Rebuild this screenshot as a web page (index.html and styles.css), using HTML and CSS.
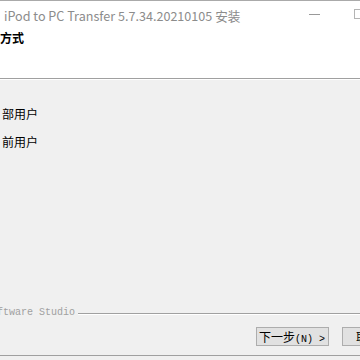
FILE: index.html
```html
<!DOCTYPE html>
<html>
<head>
<meta charset="utf-8">
<link rel="stylesheet" href="styles.css">
</head>
<body>
<div class="window">
  <div class="titlebar">
    <span class="title">iPod to PC Transfer 5.7.34.20210105 安装</span>
    <span class="min"></span>
    <span class="max"></span>
  </div>
  <div class="header">
    <div class="heading">方式</div>
  </div>
  <div class="sep"></div>
  <div class="body">
    <div class="content">
      <div class="opt opt1">部用户</div>
      <div class="opt opt2">前用户</div>
    </div>
    <div class="brand">
      <span class="brand-text">Software Studio</span>
      <span class="brand-line"></span>
    </div>
    <div class="buttons">
      <div class="btn next">下一步<span class="lat">(N) &gt;</span></div>
      <div class="btn cancel">取消<span class="lat">(C)</span></div>
    </div>
  </div>
  <div class="bottom"></div>
</div>
</body>
</html>
```
FILE: styles.css
```css
* { box-sizing: border-box; }
html, body {
  margin: 0;
  padding: 0;
  width: 360px;
  height: 360px;
  overflow: hidden;
  background: #f0f0f0;
}
.window {
  width: 360px;
  height: 360px;
  border-top: 1px solid #aaaaaa;
  font-family: "Noto Sans CJK SC", "Noto Sans", sans-serif;
  overflow: hidden;
}
.titlebar {
  height: 28px;
  background: #ffffff;
  display: flex;
  align-items: center;
}
.title {
  padding-left: 4px;
  font-size: 12.6px;
  color: #8c8c8c;
  white-space: nowrap;
}
.min {
  margin-left: auto;
  width: 11px;
  height: 1px;
  background: #999999;
  margin-top: -2px;
}
.max {
  margin-left: 34px;
  width: 10px;
  height: 10px;
  border: 1px solid #b4b4b4;
  flex-shrink: 0;
  margin-right: -4px;
  margin-top: -2px;
}
.header {
  height: 49px;
  background: #ffffff;
  padding-top: 1px;
}
.heading {
  font-size: 12px;
  font-weight: bold;
  line-height: 16px;
  color: #000;
}
.sep {
  height: 2px;
  border-top: 1px solid #a0a0a0;
  border-bottom: 1px solid #ffffff;
}
.body {
  height: 276px;
  border-bottom: 1px solid #a0a0a0;
}
.content {
  height: 227px;
  padding-top: 26px;
}
.opt {
  font-size: 12px;
  line-height: 16px;
  color: #000;
  padding-left: 2px;
}
.opt2 {
  margin-top: 12px;
}
.brand {
  height: 12px;
  display: flex;
  align-items: center;
}
.brand-text {
  margin-left: -15px;
  font-family: "Liberation Mono", monospace;
  font-size: 10px;
  color: #a0a0a0;
  white-space: nowrap;
  line-height: 12px;
}
.brand-line {
  flex: 1;
  margin-left: 3px;
  height: 2px;
  border-top: 1px solid #a0a0a0;
  border-bottom: 1px solid #ffffff;
  margin-top: 2px;
}
.buttons {
  margin-top: 8px;
  height: 19px;
  display: flex;
  padding-left: 256px;
  gap: 13px;
}
.btn {
  flex-shrink: 0;
  height: 19px;
  border: 1px solid #adadad;
  background: #e1e1e1;
  font-size: 12px;
  line-height: 17px;
  color: #000;
  white-space: nowrap;
}
.next {
  width: 73px;
  padding-left: 2px;
}
.cancel {
  width: 75px;
  padding-left: 13px;
}
.lat {
  font-family: "Liberation Mono", monospace;
  font-size: 10px;
}
```
